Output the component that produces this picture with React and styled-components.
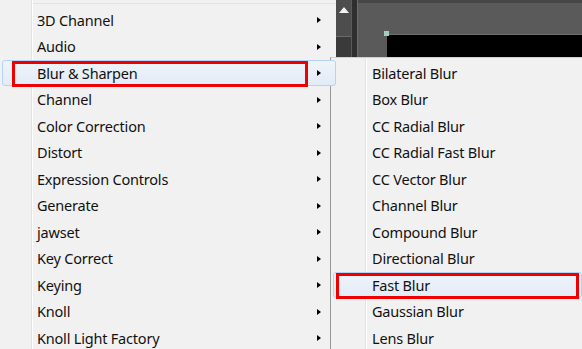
import React from "react";
import styled, { createGlobalStyle } from "styled-components";

const Global = createGlobalStyle`
  html, body { margin: 0; padding: 0; background: #f1f1f1; }
  body { font-family: "Noto Sans", "Open Sans", sans-serif; }
`;

const effects = [
  "3D Channel",
  "Audio",
  "Blur & Sharpen",
  "Channel",
  "Color Correction",
  "Distort",
  "Expression Controls",
  "Generate",
  "jawset",
  "Key Correct",
  "Keying",
  "Knoll",
  "Knoll Light Factory",
];

const blurs = [
  "Bilateral Blur",
  "Box Blur",
  "CC Radial Blur",
  "CC Radial Fast Blur",
  "CC Vector Blur",
  "Channel Blur",
  "Compound Blur",
  "Directional Blur",
  "Fast Blur",
  "Gaussian Blur",
  "Lens Blur",
];

const App = () => {
  return (
    <Screen>
      <Global />
      <Menu>
        <TopRule />
        {effects.map((name) => (
          <Row key={name} $active={name === "Blur & Sharpen"}>
            <Label $pad={37}>{name}</Label>
            <Arrow />
            {name === "Blur & Sharpen" && <Mark $left={12} $right={27} />}
          </Row>
        ))}
      </Menu>
      <Side>
        <Panel>
          <Scroller>
            <UpArrow />
          </Scroller>
          <Split />
          <Viewer>
            <Handle />
            <Comp />
          </Viewer>
        </Panel>
        <SubMenu>
          {blurs.map((name) => (
            <Row key={name} $active={name === "Fast Blur"}>
              <Label $pad={41}>{name}</Label>
              {name === "Fast Blur" && <Mark $left={5} $right={2} />}
            </Row>
          ))}
        </SubMenu>
      </Side>
    </Screen>
  );
};

export default App;

const Screen = styled.div`
  width: 582px;
  height: 349px;
  overflow: hidden;
  display: flex;
  background: #f1f1f1;
`;

const Menu = styled.div`
  width: 336px;
  flex: none;
  padding-top: 3px;
  background: linear-gradient(
    to right,
    #f1f1f1 0,
    #f1f1f1 31px,
    #e2e3e3 31px,
    #e2e3e3 32px,
    #ffffff 32px,
    #ffffff 33px,
    #f1f1f1 33px
  );
`;

const TopRule = styled.div`
  height: 1px;
  margin-left: 33px;
  margin-bottom: 2.75px;
  background: #e2e3e3;
`;

const Row = styled.div`
  position: relative;
  height: 26.5px;
  display: flex;
  align-items: center;
  margin-left: 2px;
  border-radius: 3px;
  border: 1px solid ${(p) => (p.$active ? "#b5d3f7" : "transparent")};
  box-sizing: border-box;
  background: ${(p) =>
    p.$active ? "linear-gradient(#f0f4fa, #e2ebf7)" : "transparent"};
`;

const Label = styled.span`
  padding-left: ${(p) => p.$pad - 3}px;
  flex: 1;
  font-size: 14.5px;
  letter-spacing: -0.2px;
  color: #111;
  white-space: nowrap;
  line-height: 1;
`;

const Arrow = styled.span`
  width: 0;
  height: 0;
  margin-right: 14px;
  border-top: 3.5px solid transparent;
  border-bottom: 3.5px solid transparent;
  border-left: 4px solid #000;
`;

const Mark = styled.div`
  position: absolute;
  left: ${(p) => p.$left - 3}px;
  right: ${(p) => p.$right}px;
  top: 0;
  bottom: -2px;
  border: 3px solid #ee0000;
`;

const Side = styled.div`
  flex: 1;
  display: flex;
  flex-direction: column;
  min-width: 0;
`;

const Panel = styled.div`
  height: 57px;
  flex: none;
  display: flex;
  background: #3a3a3a;
`;

const Scroller = styled.div`
  width: 15px;
  height: 37px;
  background: #4d4d4d;
  border-bottom: 1px solid #6a6a6a;
  display: flex;
  justify-content: center;
  padding-top: 7px;
  box-sizing: border-box;
`;

const UpArrow = styled.span`
  width: 0;
  height: 0;
  border-left: 5px solid transparent;
  border-right: 5px solid transparent;
  border-bottom: 6px solid #f2f2f2;
`;

const Split = styled.div`
  width: 5px;
  background: #2e2e2e;
  border-left: 1px solid #5a5a5a;
`;

const Viewer = styled.div`
  flex: 1;
  position: relative;
  background: linear-gradient(#474747 0, #474747 3px, #5a5a5a 3px);
  border-left: 1px solid #6c6c6c;
  display: flex;
  align-items: flex-end;
  padding-left: 29px;
`;

const Handle = styled.span`
  position: absolute;
  left: 26px;
  top: 31px;
  width: 5px;
  height: 5px;
  background: #a3cdc4;
`;

const Comp = styled.div`
  flex: 1;
  height: 22px;
  background: #000;
  border-top: 1px solid #6e6e6e;
`;

const SubMenu = styled.div`
  flex: 1;
  margin-left: -6px;
  padding-top: 1.75px;
  border-left: 1px solid #979797;
  border-top: 1px solid #d0d0d0;
  background: linear-gradient(
    to right,
    #f1f1f1 0,
    #f1f1f1 34px,
    #e2e3e3 34px,
    #e2e3e3 35px,
    #ffffff 35px,
    #ffffff 36px,
    #f1f1f1 36px
  );
`;
